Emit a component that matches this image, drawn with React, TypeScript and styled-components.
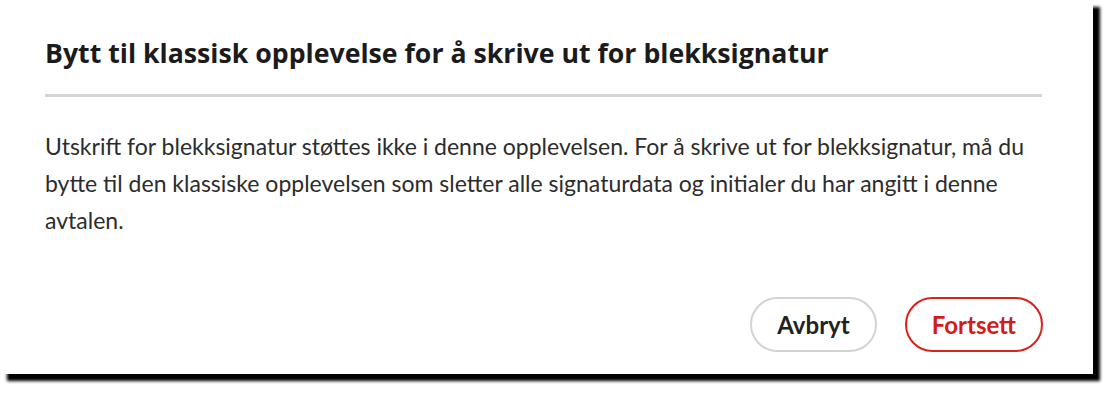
import React from "react";
import styled, { createGlobalStyle } from "styled-components";

const GlobalStyle = createGlobalStyle`
  html, body { margin: 0; padding: 0; background: #ffffff; }
  body { font-family: "Lato", "Open Sans", sans-serif; }
`;

const Page = styled.main`
  box-sizing: border-box;
  width: 1112px;
  height: 409px;
  overflow: hidden;
  background: #ffffff;
`;

const Dialog = styled.section`
  box-sizing: border-box;
  width: 1093px;
  height: 374px;
  background: #ffffff;
  box-shadow: 7px 7px 3px #000000;
  padding: 34px 50px 22px 45px;
  display: flex;
  flex-direction: column;
`;

const Title = styled.h1`
  margin: 0;
  font-family: "Open Sans", "Noto Sans", sans-serif;
  font-weight: 700;
  font-size: 26.7px;
  line-height: normal;
  color: #1b1b1b;
`;

const Divider = styled.hr`
  margin: 23px 1px 0 0;
  border: none;
  height: 3px;
  background: #d5d5d5;
`;

const Body = styled.p`
  margin: 31px 0 0 0;
  font-family: "Lato", sans-serif;
  font-size: 23px;
  line-height: 37px;
  color: #2c2c2c;
`;

const Footer = styled.div`
  margin-top: auto;
  display: flex;
  justify-content: flex-end;
  gap: 28px;
`;

const Button = styled.button<{ $variant: "secondary" | "negative" }>`
  box-sizing: border-box;
  height: 55px;
  padding: 0 25px;
  border-radius: 28px;
  background: #ffffff;
  font-family: "Lato", sans-serif;
  font-weight: 700;
  font-size: 24px;
  cursor: pointer;
  border: 2px solid ${(p) => (p.$variant === "negative" ? "#d9221c" : "#d3d3d3")};
  color: ${(p) => (p.$variant === "negative" ? "#d41b17" : "#222222")};
`;

export default function App() {
  return (
    <Page>
      <GlobalStyle />
      <Dialog role="dialog" aria-labelledby="dlg-title">
        <Title id="dlg-title">Bytt til klassisk opplevelse for å skrive ut for blekksignatur</Title>
        <Divider />
        <Body>
          Utskrift for blekksignatur støttes ikke i denne opplevelsen. For å skrive ut for blekksignatur, må du
          bytte til den klassiske opplevelsen som sletter alle signaturdata og initialer du har angitt i denne
          avtalen.
        </Body>
        <Footer>
          <Button $variant="secondary">Avbryt</Button>
          <Button $variant="negative">Fortsett</Button>
        </Footer>
      </Dialog>
    </Page>
  );
}
